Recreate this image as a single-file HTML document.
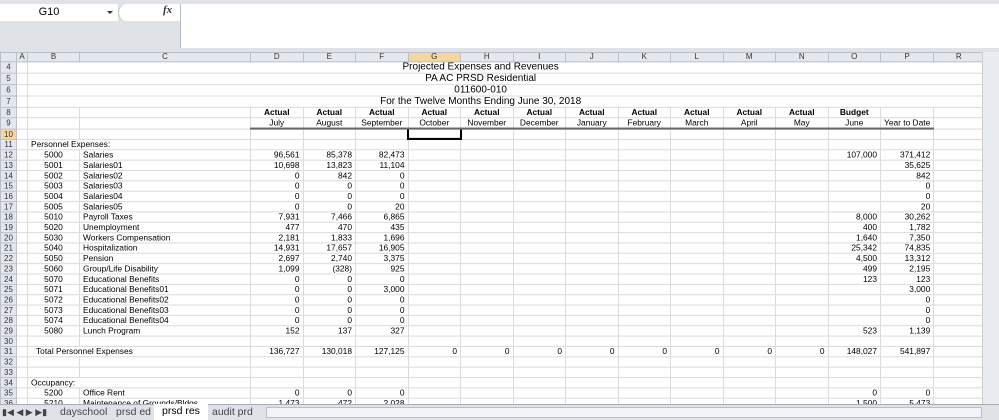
<!DOCTYPE html>
<html><head><meta charset="utf-8"><style>
*{margin:0;padding:0;box-sizing:border-box}
body{width:999px;height:420px;overflow:hidden;background:#fff;font-family:"Liberation Sans",Arial,sans-serif;position:relative}
.top{position:absolute;left:0;top:0;width:999px;height:52px;background:#dfe3e8}
.nb{position:absolute;left:0;top:4px;width:118px;height:17px;background:#fff;font-size:11px;text-align:center;line-height:17px;padding-right:20px}
.arr{position:absolute;left:107px;top:11px;width:0;height:0;border-left:3px solid transparent;border-right:3px solid transparent;border-top:3px solid #333}
.circ{position:absolute;left:118px;top:4px;width:62px;height:17px;background:#fff;border-radius:9px 0 0 9px;border-left:1px solid #b6bcc6}
.fx{position:absolute;left:163px;top:4px;font:italic bold 11px "Liberation Serif",serif;color:#333}
.fbar{position:absolute;left:180px;top:4px;width:819px;height:44px;background:#fff;border-left:1px solid #b6bcc6}
.grid{position:absolute;left:0;top:52px;border-collapse:collapse;table-layout:fixed;font-size:8.4px;transform:scaleY(1.035);transform-origin:0 0}
.grid td,.grid th{height:9.9px;line-height:9px;padding:0 3px;border:1px solid #dadcdd;white-space:nowrap;overflow:hidden}
.grid tr.tall td,.grid tr.tall th{height:10.9px;line-height:10px}
.grid th{background:#e4e8ee;font-weight:normal;color:#333;border-color:#b9c0c9;text-align:center;font-size:8px;padding:0}
.grid thead th{height:9px;line-height:8px}
.grid td.n{text-align:right}
.grid th.sel{background:#f6d69a}
.t{border-left-color:transparent!important;border-right-color:transparent!important;text-align:center;font-size:10px!important}
.h{text-align:center;font-weight:bold}
.u{text-align:center;border-bottom:2px solid #666!important}
.d{border-bottom:1px dashed #444!important}
.tabs{position:absolute;left:0;top:404px;width:999px;height:16px;background:#dfe3e8;border-top:1px solid #aab;font-size:10.5px;color:#444}
.tab{position:absolute;top:0;height:15px;line-height:14px;padding:0 8px}
.sb{position:absolute;left:982px;top:52px;width:17px;height:352px;background:#e9ecf0;border-left:1px solid #c8cdd4}
</style></head><body>
<div class="top"><div class="nb">G10</div><div class="arr"></div><div class="circ"></div><div class="fx">fx</div><div class="fbar"></div></div>
<table class="grid">
<colgroup><col style="width:16px"><col style="width:11px"><col style="width:52px"><col style="width:171px"><col span="13" style="width:52.5px"><col style="width:50px"></colgroup>
<thead><tr><th></th><th>A</th><th>B</th><th>C</th><th>D</th><th>E</th><th>F</th><th class="sel">G</th><th>H</th><th>I</th><th>J</th><th>K</th><th>L</th><th>M</th><th>N</th><th>O</th><th>P</th><th>R</th></tr></thead>
<tbody>
<tr class="tall"><th>4</th><td></td><td colspan="15" class="t">Projected Expenses and Revenues</td><td></td></tr>
<tr class="tall"><th>5</th><td></td><td colspan="15" class="t">PA AC PRSD Residential</td><td></td></tr>
<tr class="tall"><th>6</th><td></td><td colspan="15" class="t">011600-010</td><td></td></tr>
<tr class="tall"><th>7</th><td></td><td colspan="15" class="t">For the Twelve Months Ending June 30, 2018</td><td></td></tr>
<tr><th>8</th><td></td><td></td><td></td><td class="h">Actual</td><td class="h">Actual</td><td class="h">Actual</td><td class="h">Actual</td><td class="h">Actual</td><td class="h">Actual</td><td class="h">Actual</td><td class="h">Actual</td><td class="h">Actual</td><td class="h">Actual</td><td class="h">Actual</td><td class="h">Budget</td><td></td><td></td></tr>
<tr><th>9</th><td></td><td></td><td></td><td class="u">July</td><td class="u">August</td><td class="u">September</td><td class="u">October</td><td class="u">November</td><td class="u">December</td><td class="u">January</td><td class="u">February</td><td class="u">March</td><td class="u">April</td><td class="u">May</td><td class="u">June</td><td class="u">Year to Date</td><td></td></tr>
<tr><th class="sel">10</th><td></td><td></td><td></td><td></td><td></td><td></td><td style="border:2px solid #000"></td><td></td><td></td><td></td><td></td><td></td><td></td><td></td><td></td><td></td><td></td></tr>
<tr><th>11</th><td></td><td colspan="2">Personnel Expenses:</td><td></td><td></td><td></td><td></td><td></td><td></td><td></td><td></td><td></td><td></td><td></td><td></td><td></td><td></td></tr>
<tr><th>12</th><td></td><td style="text-align:center">5000</td><td>Salaries</td><td class="n">96,561</td><td class="n">85,378</td><td class="n">82,473</td><td></td><td></td><td></td><td></td><td></td><td></td><td></td><td></td><td class="n">107,000</td><td class="n">371,412</td><td></td></tr>
<tr><th>13</th><td></td><td style="text-align:center">5001</td><td>Salaries01</td><td class="n">10,698</td><td class="n">13,823</td><td class="n">11,104</td><td></td><td></td><td></td><td></td><td></td><td></td><td></td><td></td><td></td><td class="n">35,625</td><td></td></tr>
<tr><th>14</th><td></td><td style="text-align:center">5002</td><td>Salaries02</td><td class="n">0</td><td class="n">842</td><td class="n">0</td><td></td><td></td><td></td><td></td><td></td><td></td><td></td><td></td><td></td><td class="n">842</td><td></td></tr>
<tr><th>15</th><td></td><td style="text-align:center">5003</td><td>Salaries03</td><td class="n">0</td><td class="n">0</td><td class="n">0</td><td></td><td></td><td></td><td></td><td></td><td></td><td></td><td></td><td></td><td class="n">0</td><td></td></tr>
<tr><th>16</th><td></td><td style="text-align:center">5004</td><td>Salaries04</td><td class="n">0</td><td class="n">0</td><td class="n">0</td><td></td><td></td><td></td><td></td><td></td><td></td><td></td><td></td><td></td><td class="n">0</td><td></td></tr>
<tr><th>17</th><td></td><td style="text-align:center">5005</td><td>Salaries05</td><td class="n">0</td><td class="n">0</td><td class="n">20</td><td></td><td></td><td></td><td></td><td></td><td></td><td></td><td></td><td></td><td class="n">20</td><td></td></tr>
<tr><th>18</th><td></td><td style="text-align:center">5010</td><td>Payroll Taxes</td><td class="n">7,931</td><td class="n">7,466</td><td class="n">6,865</td><td></td><td></td><td></td><td></td><td></td><td></td><td></td><td></td><td class="n">8,000</td><td class="n">30,262</td><td></td></tr>
<tr><th>19</th><td></td><td style="text-align:center">5020</td><td>Unemployment</td><td class="n">477</td><td class="n">470</td><td class="n">435</td><td></td><td></td><td></td><td></td><td></td><td></td><td></td><td></td><td class="n">400</td><td class="n">1,782</td><td></td></tr>
<tr><th>20</th><td></td><td style="text-align:center">5030</td><td>Workers Compensation</td><td class="n">2,181</td><td class="n">1,833</td><td class="n">1,696</td><td></td><td></td><td></td><td></td><td></td><td></td><td></td><td></td><td class="n">1,640</td><td class="n">7,350</td><td></td></tr>
<tr><th>21</th><td></td><td style="text-align:center">5040</td><td>Hospitalization</td><td class="n">14,931</td><td class="n">17,657</td><td class="n">16,905</td><td></td><td></td><td></td><td></td><td></td><td></td><td></td><td></td><td class="n">25,342</td><td class="n">74,835</td><td></td></tr>
<tr><th>22</th><td></td><td style="text-align:center">5050</td><td>Pension</td><td class="n">2,697</td><td class="n">2,740</td><td class="n">3,375</td><td></td><td></td><td></td><td></td><td></td><td></td><td></td><td></td><td class="n">4,500</td><td class="n">13,312</td><td></td></tr>
<tr><th>23</th><td></td><td style="text-align:center">5060</td><td>Group/Life Disability</td><td class="n">1,099</td><td class="n">(328)</td><td class="n">925</td><td></td><td></td><td></td><td></td><td></td><td></td><td></td><td></td><td class="n">499</td><td class="n">2,195</td><td></td></tr>
<tr><th>24</th><td></td><td style="text-align:center">5070</td><td>Educational Benefits</td><td class="n">0</td><td class="n">0</td><td class="n">0</td><td></td><td></td><td></td><td></td><td></td><td></td><td></td><td></td><td class="n">123</td><td class="n">123</td><td></td></tr>
<tr><th>25</th><td></td><td style="text-align:center">5071</td><td>Educational Benefits01</td><td class="n">0</td><td class="n">0</td><td class="n">3,000</td><td></td><td></td><td></td><td></td><td></td><td></td><td></td><td></td><td></td><td class="n">3,000</td><td></td></tr>
<tr><th>26</th><td></td><td style="text-align:center">5072</td><td>Educational Benefits02</td><td class="n">0</td><td class="n">0</td><td class="n">0</td><td></td><td></td><td></td><td></td><td></td><td></td><td></td><td></td><td></td><td class="n">0</td><td></td></tr>
<tr><th>27</th><td></td><td style="text-align:center">5073</td><td>Educational Benefits03</td><td class="n">0</td><td class="n">0</td><td class="n">0</td><td></td><td></td><td></td><td></td><td></td><td></td><td></td><td></td><td></td><td class="n">0</td><td></td></tr>
<tr><th>28</th><td></td><td style="text-align:center">5074</td><td>Educational Benefits04</td><td class="n">0</td><td class="n">0</td><td class="n">0</td><td></td><td></td><td></td><td></td><td></td><td></td><td></td><td></td><td></td><td class="n">0</td><td></td></tr>
<tr><th>29</th><td></td><td style="text-align:center">5080</td><td>Lunch Program</td><td class="n">152</td><td class="n">137</td><td class="n">327</td><td></td><td></td><td></td><td></td><td></td><td></td><td></td><td></td><td class="n">523</td><td class="n">1,139</td><td></td></tr>
<tr><th>30</th><td></td><td></td><td></td><td class="d"></td><td class="d"></td><td class="d"></td><td class="d"></td><td class="d"></td><td class="d"></td><td class="d"></td><td class="d"></td><td class="d"></td><td class="d"></td><td class="d"></td><td class="d"></td><td class="d"></td><td></td></tr>
<tr><th>31</th><td></td><td colspan="2" style="padding-left:8px">Total Personnel Expenses</td><td class="n">136,727</td><td class="n">130,018</td><td class="n">127,125</td><td class="n">0</td><td class="n">0</td><td class="n">0</td><td class="n">0</td><td class="n">0</td><td class="n">0</td><td class="n">0</td><td class="n">0</td><td class="n">148,027</td><td class="n">541,897</td><td></td></tr>
<tr><th>32</th><td></td><td></td><td></td><td class="d"></td><td class="d"></td><td class="d"></td><td class="d"></td><td class="d"></td><td class="d"></td><td class="d"></td><td class="d"></td><td class="d"></td><td class="d"></td><td class="d"></td><td class="d"></td><td class="d"></td><td></td></tr>
<tr><th>33</th><td></td><td></td><td></td><td></td><td></td><td></td><td></td><td></td><td></td><td></td><td></td><td></td><td></td><td></td><td></td><td></td><td></td></tr>
<tr><th>34</th><td></td><td colspan="2">Occupancy:</td><td></td><td></td><td></td><td></td><td></td><td></td><td></td><td></td><td></td><td></td><td></td><td></td><td></td><td></td></tr>
<tr><th>35</th><td></td><td style="text-align:center">5200</td><td>Office Rent</td><td class="n">0</td><td class="n">0</td><td class="n">0</td><td></td><td></td><td></td><td></td><td></td><td></td><td></td><td></td><td class="n">0</td><td class="n">0</td><td></td></tr>
<tr><th>36</th><td></td><td style="text-align:center">5210</td><td>Maintenance of Grounds/Bldgs</td><td class="n">1,473</td><td class="n">472</td><td class="n">2,028</td><td></td><td></td><td></td><td></td><td></td><td></td><td></td><td></td><td class="n">1,500</td><td class="n">5,473</td><td></td></tr>
</tbody></table>
<div class="sb"></div>
<div class="tabs">
<div class="tab" style="left:2px;padding:0;font-size:9px">&#9646;&#9664; &#9664; &#9654; &#9654;&#9646;</div>
<div class="tab" style="left:52px">dayschool</div>
<div class="tab" style="left:108px">prsd ed</div>
<div class="tab" style="left:154px;background:#fff;color:#000;top:-1px;height:16px">prsd res</div>
<div class="tab" style="left:204px">audit prd</div>
<div style="position:absolute;left:266px;top:2px;width:716px;height:11px;background:#f2f3f5;border:1px solid #b9c0c9"></div>
</div>
</body></html>
